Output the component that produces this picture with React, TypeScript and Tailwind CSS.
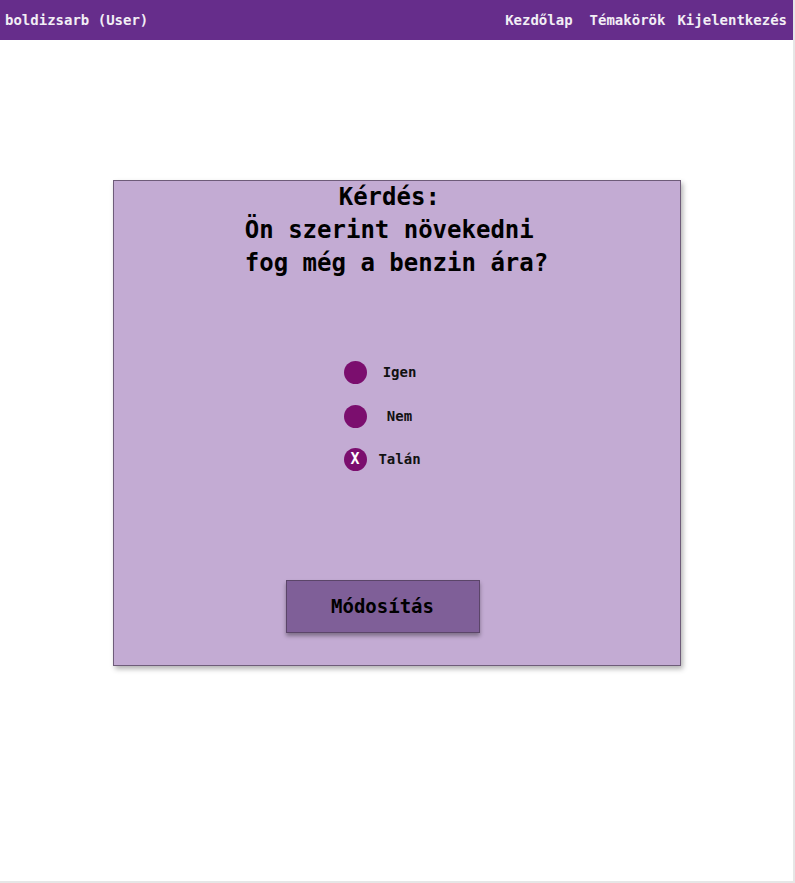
const mono = "font-['DejaVu_Sans_Mono','Liberation_Mono',monospace]";

const options = [
  { label: "Igen", checked: false },
  { label: "Nem", checked: false },
  { label: "Talán", checked: true },
];

function NavBar() {
  return (
    <header className={`flex h-10 items-center justify-between bg-[#662d8b] pl-[5px] pr-[6px] text-[14px] font-bold text-[#f2eef5] ${mono}`}>
      <span>boldizsarb (User)</span>
      <nav className="flex items-center">
        <a>Kezdőlap</a>
        <a className="ml-[17px]">Témakörök</a>
        <a className="ml-[12px]">Kijelentkezés</a>
      </nav>
    </header>
  );
}

function Option({ label, checked }: { label: string; checked: boolean }) {
  return (
    <div className="flex h-[23px] items-center">
      <span className="flex h-[23px] w-[23px] items-center justify-center rounded-full bg-[#7b0e6e] text-[15px] font-bold leading-none text-white">
        {checked ? "X" : ""}
      </span>
      <span className="w-[66px] text-center text-[14px] font-bold text-[#111]">{label}</span>
    </div>
  );
}

export default function App() {
  return (
    <div className={`h-[883px] border-r-2 border-b-2 border-[#e6e6e6] bg-white ${mono}`}>
      <NavBar />
      <div className="mt-[140px] flex justify-center">
        <div className="flex h-[486px] w-[568px] flex-col border border-[#6e5c79] bg-[#c3abd3] shadow-[2px_3px_5px_rgba(0,0,0,0.3)]">
          <h1 className="whitespace-pre text-center text-[24px] font-bold leading-[33px] text-black">
            <div>{"Kérdés: "}</div>
            <div>{"Ön szerint növekedni "}</div>
            <div>{"fog még a benzin ára?"}</div>
          </h1>
          <div className="mt-[81px] flex flex-col gap-[20.5px] pl-[230px]">
            {options.map((o) => (
              <Option key={o.label} label={o.label} checked={o.checked} />
            ))}
          </div>
          <div className="mt-[109px] pl-[172px]">
            <button className="h-[53px] w-[194px] border border-[#5b4569] bg-[#7f5f98] text-[19px] font-bold text-black shadow-[0_3px_4px_rgba(0,0,0,0.35)]">
              Módosítás
            </button>
          </div>
        </div>
      </div>
    </div>
  );
}
